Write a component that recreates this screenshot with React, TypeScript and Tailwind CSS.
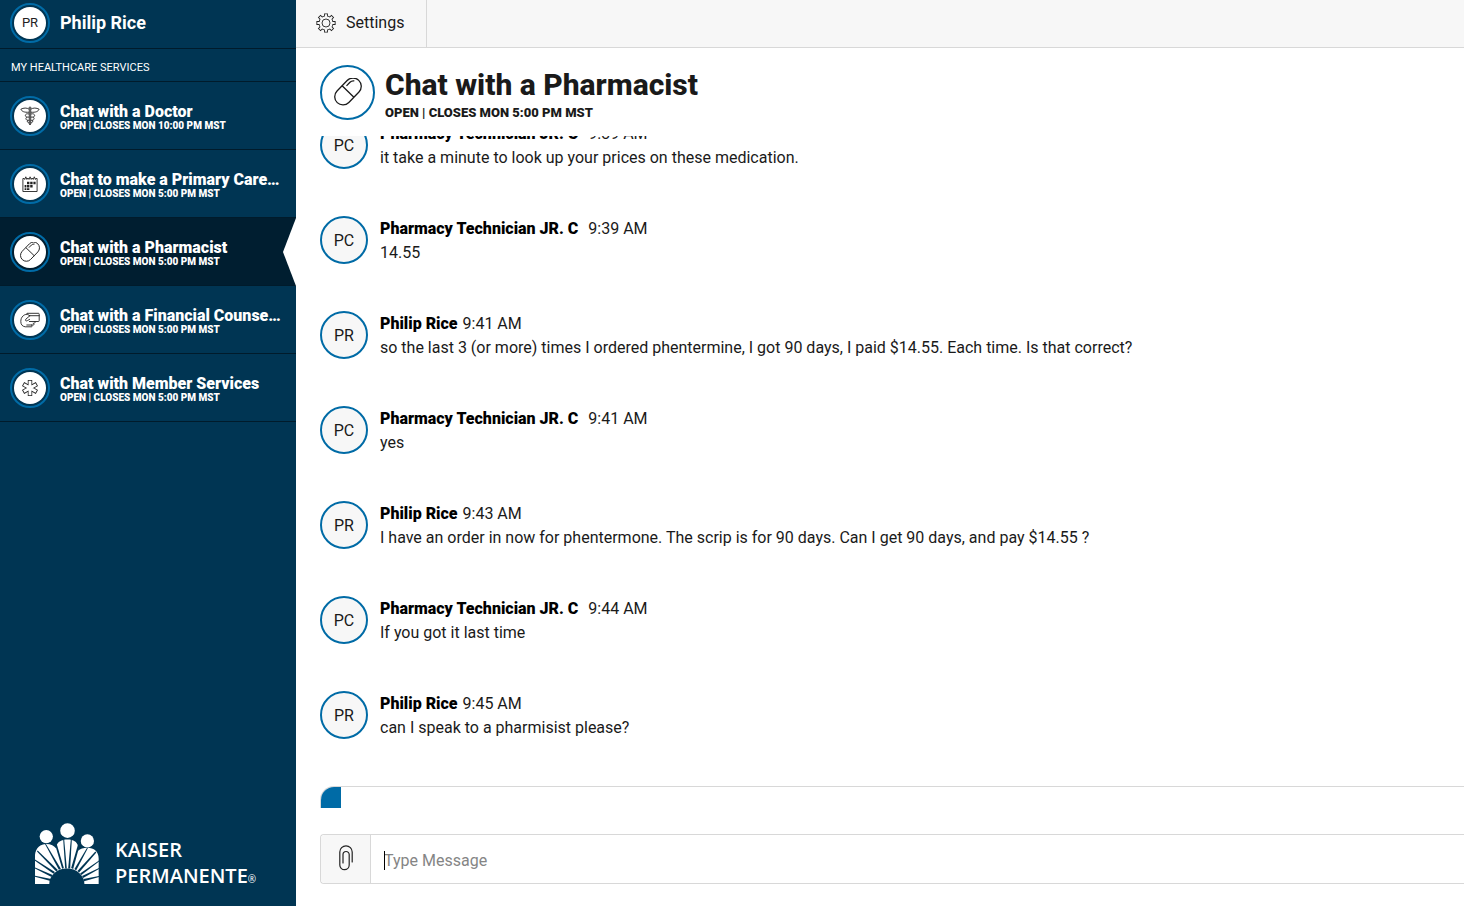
import React, { useState } from 'react';
import clsx from 'clsx';

type IconProps = { className?: string };

type Service = {
  id: string;
  title: string;
  status: string;
  Icon: (props: IconProps) => React.ReactElement;
};

type Message = {
  initials: string;
  author: string;
  time: string;
  text: string;
  isAgent?: boolean;
};

const DoctorIcon = ({ className }: IconProps) => (
  <svg viewBox="0 0 20 20" fill="none" stroke="#222" strokeWidth="0.9" strokeLinejoin="round" className={className} aria-hidden="true">
    <circle cx="10" cy="2" r="1" />
    <path d="M9.1 3.2C7 1.6 3.4 1.8 0.9 3.2c0.8 2.2 3.4 3.4 8.1 3M10.9 3.2c2.1-1.6 5.7-1.4 8.2 0-0.8 2.2-3.4 3.4-8.1 3" />
    <path d="M9.3 3.2v14.8l0.7 1 0.7-1V3.2" />
    <path d="M9 8C5.4 6.8 4 10.4 7 11.1h2.2M11 8c3.6-1.2 5 2.4 2 3.1h-2.2" />
    <path d="M6.8 11.1c-1.8 1.6-0.8 3.4 2.4 3.2M13.2 11.1c1.8 1.6 0.8 3.4-2.4 3.2M7.6 14.3c-0.8 1.4 0 2.4 1.6 2.6M12.4 14.3c0.8 1.4 0 2.4-1.6 2.6" />
  </svg>
);

const CalendarIcon = ({ className }: IconProps) => (
  <svg viewBox="0 0 20 20" fill="none" stroke="#222" strokeWidth="0.9" className={className} aria-hidden="true">
    <path d="M4.6 4.5H2.9v13h14.2v-13h-1.7M6.9 4.5h2M11.2 4.5h2" />
    <path d="M4.6 5.8l1.2-3 1.2 3M8.9 5.8l1.2-3 1.2 3M13.1 5.8l1.2-3 1.2 3" />
    <path d="M7 9h2.4M10.2 9h2.4M13.4 9h2.2M4.6 12.2H6.4M7 12.2h2.4M10.2 12.2h2.4" strokeWidth="2.4" />
    <path d="M4.6 15.2h1.8M7 15.2h2.4" strokeWidth="1.8" />
  </svg>
);

const PillIcon = ({ className }: IconProps) => (
  <svg viewBox="0 0 28 28" fill="none" stroke="currentColor" strokeWidth="1.3" className={className} aria-hidden="true">
    <g transform="rotate(-46 14 13.5)">
      <rect x="-1.5" y="5.3" width="31" height="16.4" rx="8.2" />
      <path d="M14 5.3v16.4M17 8.5h5a5 5 0 0 1 4 2.2" />
    </g>
  </svg>
);

const CounselorIcon = ({ className }: IconProps) => (
  <svg viewBox="0 0 20 20" fill="none" stroke="#222" strokeWidth="0.9" strokeLinejoin="round" strokeLinecap="round" className={className} aria-hidden="true">
    <path d="M6.4 4.3l0.6-1h11.4q0.8 0 0.8 0.8v6.6q0 0.8-0.8 0.8h-9" />
    <path d="M9.2 5.7h10" />
    <path d="M9.8 5.8C7.6 3.6 5 4.2 3.2 5.8 1.4 7.4 0.8 9.4 0.8 11.6c0 3 1.6 4.8 4.4 5.2h6.2c1.2-0.2 1.2-1.6 0-1.8" />
    <path d="M6.8 15h6.4c1.4-0.2 1.4-1.6 0-1.8M14 13.2c1.4-0.2 1.4-1.2 1-1.7" />
    <path d="M9.8 5.8L5.8 9.2c-1 1.4 0.4 2.2 1.6 1.4l2.2-1.2" />
  </svg>
);

const MemberIcon = ({ className }: IconProps) => (
  <svg viewBox="0 0 20 20" className={className} aria-hidden="true">
    <path d="M10 2v16M3.1 6l13.8 8M16.9 6L3.1 14" stroke="#222" strokeWidth="4.4" />
    <path d="M10 2.8v14.4M3.8 6.4l12.4 7.2M16.2 6.4l-12.4 7.2" stroke="#fff" strokeWidth="2.9" />
  </svg>
);

const GearIcon = ({ className }: IconProps) => (
  <svg viewBox="0 0 20 20" className={className} aria-hidden="true">
    <g fill="#222" stroke="#222">
      <path d="M10 0.4v19.2M0.4 10h19.2M3.2 3.2l13.6 13.6M16.8 3.2L3.2 16.8" strokeWidth="3.9" />
      <circle cx="10" cy="10" r="7.5" stroke="none" />
    </g>
    <g fill="#f7f7f7" stroke="#f7f7f7">
      <path d="M10 1.3v17.4M1.3 10h17.4M3.8 3.8l12.4 12.4M16.2 3.8L3.8 16.2" strokeWidth="2.2" />
      <circle cx="10" cy="10" r="6.7" stroke="none" />
    </g>
    <circle cx="10" cy="10" r="4" fill="none" stroke="#222" strokeWidth="0.9" />
  </svg>
);

const PaperclipIcon = ({ className }: IconProps) => (
  <svg viewBox="0 0 14 26" fill="none" stroke="#222" strokeWidth="1.2" strokeLinecap="round" className={className} aria-hidden="true">
    <path d="M13.2 17V7A6.2 6.2 0 0 0 0.8 7v13a4.7 4.7 0 0 0 9.4 0V9.6a3.1 3.1 0 0 0-6.2 0V18" />
  </svg>
);

const KaiserMark = ({ className }: IconProps) => (
  <svg viewBox="45 38 193 184" className={className} aria-hidden="true">
    <g fill="#fff">
      <circle cx="79" cy="79" r="20" />
      <circle cx="143" cy="61" r="22" />
      <circle cx="203" cy="92" r="20" />
      <path d="M45 222V134C47 112 62 101 79 101c14 0 24 5 30 14V107c5-12 15-19 34-19s28 7 32 19v15c6-6 16-9 28-9 20 0 34 12 34 32v77Z" />
    </g>
    {/* gaps between the rays, narrow at the shoulders and wide at the arch */}
    <g fill="#003553">
      <path d="M88 222a53 47 0 0 1 106 0Z" />
      <path d="M44 197L44 200 92 213 94 207Z" />
      <path d="M44 172L44 175 95 201 98 195Z" />
      <path d="M45 148L44 151 101 191 105 186Z" />
      <path d="M53 121L51 124 109 184 114 180Z" />
      <path d="M78 101L75 101 117 179 123 176Z" />
      <path d="M110 100L106 104 127 176 132 174Z" />
      <path d="M133 88L130 88 136 175 141 175Z" />
      <path d="M153 88L156 88 151 175 145 175Z" />
      <path d="M175 102L179 107 160 177 154 174Z" />
      <path d="M202 113L205 113 169 181 164 177Z" />
      <path d="M227 124L230 127 178 187 173 183Z" />
      <path d="M238 151L238 154 185 195 181 190Z" />
      <path d="M238 174L238 177 190 204 187 198Z" />
      <path d="M238 198L238 201 193 214 191 207Z" />
    </g>
  </svg>
);

const SERVICES: Service[] = [
  { id: 'doctor', title: 'Chat with a Doctor', status: 'OPEN | CLOSES MON 10:00 PM MST', Icon: DoctorIcon },
  { id: 'primary', title: 'Chat to make a Primary Care…', status: 'OPEN | CLOSES MON 5:00 PM MST', Icon: CalendarIcon },
  { id: 'pharmacist', title: 'Chat with a Pharmacist', status: 'OPEN | CLOSES MON 5:00 PM MST', Icon: PillIcon },
  { id: 'financial', title: 'Chat with a Financial Counse…', status: 'OPEN | CLOSES MON 5:00 PM MST', Icon: CounselorIcon },
  { id: 'member', title: 'Chat with Member Services', status: 'OPEN | CLOSES MON 5:00 PM MST', Icon: MemberIcon },
];

const AGENT = 'Pharmacy Technician JR. C';

const MESSAGES: Message[] = [
  { initials: 'PC', author: AGENT, time: '9:39 AM', text: 'it take a minute to look up your prices on these medication.', isAgent: true },
  { initials: 'PC', author: AGENT, time: '9:39 AM', text: '14.55', isAgent: true },
  { initials: 'PR', author: 'Philip Rice', time: '9:41 AM', text: 'so the last 3 (or more) times I ordered phentermine, I got 90 days, I paid $14.55. Each time. Is that correct?' },
  { initials: 'PC', author: AGENT, time: '9:41 AM', text: 'yes', isAgent: true },
  { initials: 'PR', author: 'Philip Rice', time: '9:43 AM', text: 'I have an order in now for phentermone. The scrip is for 90 days. Can I get 90 days, and pay $14.55 ?' },
  { initials: 'PC', author: AGENT, time: '9:44 AM', text: 'If you got it last time', isAgent: true },
  { initials: 'PR', author: 'Philip Rice', time: '9:45 AM', text: 'can I speak to a pharmisist please?' },
];

const RingedCircle = ({ children }: { children: React.ReactNode }) => (
  <span className="flex size-10 shrink-0 items-center justify-center rounded-full border-2 border-[#006ba6] p-0.5">
    <span className="flex size-full items-center justify-center rounded-full bg-white text-[13px] text-[#222]">
      {children}
    </span>
  </span>
);

const Sidebar = ({ activeId, onSelect }: { activeId: string; onSelect: (id: string) => void }) => (
  <aside className="flex w-[296px] shrink-0 flex-col bg-[#003553] text-white">
    <div className="flex h-[49px] items-center gap-2.5 border-b border-[#001b2b] px-2.5 pb-0.5">
      <RingedCircle>PR</RingedCircle>
      <span className="text-lg font-bold">Philip Rice</span>
    </div>
    <h2 className="border-b border-[#001b2b] px-[11px] pt-[11px] pb-[5px] text-[11px] leading-4">MY HEALTHCARE SERVICES</h2>

    <nav>
      {SERVICES.map(({ id, title, status, Icon }) => (
        <button
          key={id}
          type="button"
          onClick={() => onSelect(id)}
          className={clsx(
            'relative flex h-[68px] w-full items-center gap-2.5 border-b border-[#001b2b] pr-2.5 pl-2.5 text-left',
            id === activeId && 'bg-[#001e30]',
          )}
        >
          <RingedCircle>
            <Icon className="size-5" />
          </RingedCircle>
          <span className="min-w-0 flex-1 pt-0.5">
            <span className="block text-base leading-5 font-black whitespace-nowrap">{title}</span>
            <span className="-mt-0.5 block text-[10px] leading-3 font-black">{status}</span>
          </span>
          {id === activeId && (
            <svg viewBox="0 0 13 68" className="absolute top-0 right-0 h-[68px] w-[13px]" aria-hidden="true">
              <path d="M13 0L0 34l13 34Z" fill="#fff" />
            </svg>
          )}
        </button>
      ))}
    </nav>

    <div className="mt-auto flex items-end gap-4 pb-[22px] pl-[35px]">
      <KaiserMark className="h-[61px] w-16" />
      <div className="-mb-2 font-['Open_Sans',sans-serif] text-xl leading-[26px] font-semibold">
        <div>KAISER</div>
        <div className="flex items-baseline">
          PERMANENTE<span className="text-[10px] font-normal">®</span>
        </div>
      </div>
    </div>
  </aside>
);

const MessageRow = ({ message }: { message: Message }) => (
  <li className="flex shrink-0 gap-3 pb-[46px]">
    <span className="flex size-12 shrink-0 items-center justify-center rounded-full border-2 border-[#006ba6] bg-[#f7f7f7] pt-0.5">
      {message.initials}
    </span>
    <div className="pt-px leading-6">
      <div className={clsx('flex', message.isAgent ? 'gap-2.5' : 'gap-[5px]')}>
        <span className="font-black text-black">{message.author}</span>
        <span>{message.time}</span>
      </div>
      <p>{message.text}</p>
    </div>
  </li>
);

export default function App() {
  const [activeId, setActiveId] = useState('pharmacist');
  const [draft, setDraft] = useState('');

  const active = SERVICES.find(s => s.id === activeId) ?? SERVICES[0];

  return (
    <div className="flex h-screen overflow-hidden bg-white font-[Roboto,sans-serif] text-base text-[#1a1a1a]">
      <Sidebar activeId={activeId} onSelect={setActiveId} />

      <main className="flex min-w-0 flex-1 flex-col">
        <header className="flex h-12 shrink-0 border-b border-[#d8d8d8] bg-[#f7f7f7]">
          <button type="button" className="flex items-center gap-2.5 border-r border-[#d8d8d8] pr-[22px] pb-0.5 pl-5">
            <GearIcon className="size-5" />
            Settings
          </button>
        </header>

        <div className="flex min-h-0 flex-1 flex-col pb-[22px] pl-6">
          <div className="flex shrink-0 items-start gap-2.5 pt-[17px] pb-3.5">
            <span className="flex size-[55px] items-center justify-center rounded-full border-2 border-[#006ba6] pb-0.5">
              <active.Icon className="size-7" />
            </span>
            <div className="pt-px">
              <h1 className="text-3xl leading-[38px] font-extrabold">{active.title}</h1>
              <p className="text-[13px] leading-[18px] font-black">{active.status}</p>
            </div>
          </div>

          <ul className="flex min-h-0 flex-1 flex-col justify-end overflow-hidden">
            {MESSAGES.map((message, i) => (
              <MessageRow key={i} message={message} />
            ))}
          </ul>

          <div className="mb-[26px] h-[22px] shrink-0 overflow-hidden rounded-tl-[14px] border-t border-l border-[#d8d8d8]">
            <div className="h-full w-5 bg-[#006ba6]" />
          </div>

          <form
            className="flex h-[50px] shrink-0 rounded-l border border-r-0 border-[#d8d8d8]"
            onSubmit={e => {
              e.preventDefault();
              setDraft('');
            }}
          >
            <button
              type="button"
              aria-label="Attach file"
              className="flex w-[50px] shrink-0 items-center justify-center rounded-l border-r border-[#d8d8d8] bg-[#f7f7f7] pb-0.5"
            >
              <PaperclipIcon className="h-[26px] w-3.5" />
            </button>
            <div className="relative flex min-w-0 flex-1">
              <input
                type="text"
                aria-label="Message"
                placeholder="Type Message"
                value={draft}
                onChange={e => setDraft(e.target.value)}
                className="min-w-0 flex-1 px-[13px] pt-[3px] outline-none placeholder:text-[#858585]"
              />
              {draft === '' && <span className="pointer-events-none absolute top-4 left-[13px] h-[19px] w-px bg-black" />}
            </div>
          </form>
        </div>
      </main>
    </div>
  );
}
